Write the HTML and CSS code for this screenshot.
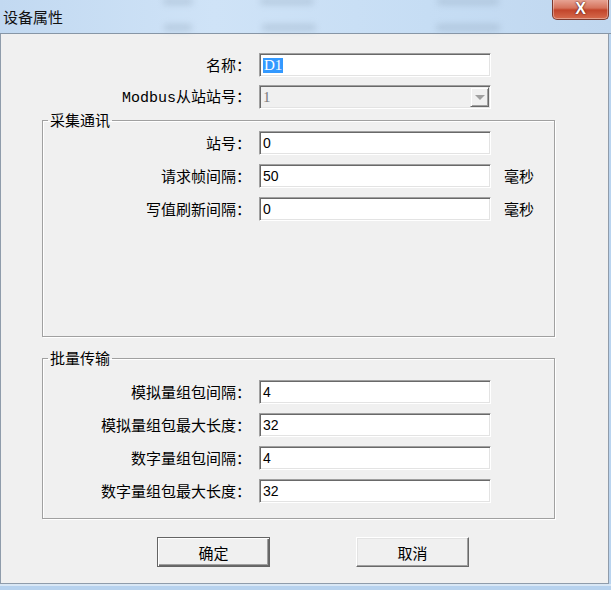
FILE: index.html
```html
<!DOCTYPE html>
<html lang="zh-CN">
<head>
    <meta charset="UTF-8">
    <title>设备属性</title>
    <link rel="stylesheet" href="styles.css">
</head>
<body>
    <div class="window">
        <!-- Barra de titulo (vidrio azul) -->
        <div class="titlebar">
            <span class="title">设备属性</span>
            <span class="ghost g1"></span>
            <span class="ghost g2"></span>
            <span class="ghost g3"></span>
            <span class="ghost g4"></span>
            <span class="ghost g5"></span>
            <span class="ghost g6"></span>
            <button class="close">X</button>
        </div>

        <div class="client">
            <div class="row">
                <label>名称：</label>
                <div class="edit"><span class="selected">D1</span></div>
            </div>
            <div class="row">
                <label><span class="latin">Modbus</span>从站站号：</label>
                <div class="combo"><span class="combo-value">1</span><span class="drop"><span class="arrow"></span></span></div>
            </div>

            <fieldset class="group group-comm">
                <legend>采集通讯</legend>
                <div class="row">
                    <label>站号：</label>
                    <div class="edit"><span>0</span></div>
                </div>
                <div class="row">
                    <label>请求帧间隔：</label>
                    <div class="edit"><span>50</span></div>
                    <span class="unit">毫秒</span>
                </div>
                <div class="row">
                    <label>写值刷新间隔：</label>
                    <div class="edit"><span>0</span></div>
                    <span class="unit">毫秒</span>
                </div>
            </fieldset>

            <fieldset class="group group-batch">
                <legend>批量传输</legend>
                <div class="row">
                    <label>模拟量组包间隔：</label>
                    <div class="edit"><span>4</span></div>
                </div>
                <div class="row">
                    <label>模拟量组包最大长度：</label>
                    <div class="edit"><span>32</span></div>
                </div>
                <div class="row">
                    <label>数字量组包间隔：</label>
                    <div class="edit"><span>4</span></div>
                </div>
                <div class="row">
                    <label>数字量组包最大长度：</label>
                    <div class="edit"><span>32</span></div>
                </div>
            </fieldset>

            <div class="buttons">
                <button class="btn btn-default">确定</button>
                <button class="btn">取消</button>
            </div>
        </div>

        <div class="frame-bottom"></div>
    </div>
</body>
</html>
```

FILE: styles.css
```css
/* Estilos generales */
body {
    margin: 0;
    padding: 0;
    background-color: #b9d3ee;
    font-family: "Noto Sans CJK SC", "Liberation Sans", sans-serif;
    font-size: 15px;
    color: #000;
}

.window {
    width: 611px;
    height: 590px;
    display: flex;
    flex-direction: column;
    overflow: hidden;
    background-color: #bad4ef;
}

/* Barra de titulo */
.titlebar {
    position: relative;
    height: 33px;
    flex: none;
    display: flex;
    align-items: center;
    background: linear-gradient(to right, #c2d9f1 0%, #cfe3f7 35%, #c6ddf4 70%, #c0d7ef 100%);
    border-bottom: 1px solid #8796a6;
}

.title {
    margin-left: 3px;
    font-size: 15px;
    line-height: 16px;
    color: #111;
}

.ghost {
    position: absolute;
    height: 7px;
    background: #8ea3b8;
    opacity: 0.35;
    filter: blur(3px);
    border-radius: 3px;
}

.g1 { left: 163px; top: -2px; width: 30px; }
.g2 { left: 260px; top: -2px; width: 54px; }
.g3 { left: 437px; top: -2px; width: 62px; }
.g4 { left: 164px; top: 24px; width: 28px; }
.g5 { left: 262px; top: 24px; width: 54px; }
.g6 { left: 436px; top: 24px; width: 64px; }

.close {
    position: absolute;
    top: -1px;
    right: 2px;
    width: 57px;
    height: 21px;
    padding: 0;
    border: 1px solid #7c3a2e;
    border-top: none;
    border-radius: 0 0 5px 5px;
    background: linear-gradient(to bottom, #e9a99a 0%, #d5735c 45%, #c2452b 55%, #d66b4d 100%);
    box-shadow: inset 0 0 0 1px rgba(255, 255, 255, 0.35);
    color: #fff;
    font-family: "Liberation Sans", sans-serif;
    font-weight: bold;
    font-size: 16px;
    line-height: 18px;
    text-shadow: 0 0 2px #5a1c10, 0 0 1px #5a1c10;
}

/* Area cliente */
.client {
    width: 607px;
    height: 530px;
    flex: none;
    background-color: #f0f0f0;
    border: 1px solid #8f9cab;
    border-top: none;
    padding-top: 19px;
    box-sizing: content-box;
}

.frame-bottom {
    flex: 1;
    border-top: 2px solid #d9e7f5;
    background-color: #b7d2ee;
}

.row {
    display: grid;
    grid-template-columns: 250px 232px auto;
    column-gap: 8px;
    align-items: center;
    height: 24px;
    margin-bottom: 8px;
}

.row label {
    text-align: right;
    line-height: 16px;
    white-space: nowrap;
}

.latin {
    font-family: "Liberation Mono", monospace;
    font-size: 15px;
}

.unit {
    margin-left: 5px;
    line-height: 16px;
}

/* Campos de texto */
.edit, .combo {
    height: 24px;
    box-sizing: border-box;
    background-color: #fff;
    border-top: 1px solid #a0a0a0;
    border-left: 1px solid #a0a0a0;
    border-right: 1px solid #fff;
    border-bottom: 1px solid #fff;
    box-shadow: inset 1px 1px 0 #696969, inset -1px -1px 0 #e3e3e3;
    display: flex;
    align-items: center;
    padding-left: 3px;
    font-family: "Liberation Sans", sans-serif;
    font-size: 14px;
}

.selected {
    font-family: "Liberation Serif", serif;
    font-size: 15px;
    line-height: 15px;
    background-color: #3399ff;
    color: #fff;
    padding: 0 1px;
}

.combo {
    background-color: #f0f0f0;
    justify-content: space-between;
    padding-right: 1px;
}

.combo-value {
    font-family: "Liberation Serif", serif;
    font-size: 15px;
    color: #7a7a7a;
}

.drop {
    width: 19px;
    height: 20px;
    box-sizing: border-box;
    border-top: 1px solid #f0f0f0;
    border-left: 1px solid #f0f0f0;
    border-right: 1px solid #696969;
    border-bottom: 1px solid #696969;
    box-shadow: inset 1px 1px 0 #fff, inset -1px -1px 0 #a0a0a0;
    display: flex;
    align-items: center;
    justify-content: center;
}

.arrow {
    width: 0;
    height: 0;
    border-left: 5px solid transparent;
    border-right: 5px solid transparent;
    border-top: 5px solid #a0a0a0;
}

/* Grupos */
.group {
    width: 513px;
    box-sizing: border-box;
    margin: 0 0 0 41px;
    padding: 0;
    border: 1px solid #a0a0a0;
    box-shadow: 1px 1px 0 #fff, inset 1px 1px 0 #fff;
    min-inline-size: 0;
}

.group legend {
    margin-left: 5px;
    padding: 0 2px;
    line-height: 16px;
    font-size: 15px;
}

.group .row {
    grid-template-columns: 208px 232px auto;
    margin-bottom: 9px;
}

.group .row:last-child {
    margin-bottom: 0;
}

.group-comm {
    margin-top: -5px;
    padding-top: 3px;
    padding-bottom: 115px;
}

.group-batch {
    margin-top: 13px;
    padding-top: 14px;
    padding-bottom: 15px;
}

/* Botones */
.buttons {
    display: flex;
    gap: 86px;
    padding-left: 156px;
    margin-top: 18px;
}

.btn {
    width: 113px;
    height: 30px;
    background-color: #f0f0f0;
    border-top: 1px solid #fff;
    border-left: 1px solid #fff;
    border-right: 1px solid #696969;
    border-bottom: 1px solid #696969;
    box-shadow: inset -1px -1px 0 #a0a0a0, inset 1px 1px 0 #e3e3e3;
    font-family: "Noto Sans CJK SC", sans-serif;
    font-size: 15px;
    color: #000;
    padding: 0;
}

.btn-default {
    border: 1px solid #646464;
    box-shadow: inset 1px 1px 0 #fff, inset -1px -1px 0 #696969, inset -2px -2px 0 #a0a0a0;
}
```
